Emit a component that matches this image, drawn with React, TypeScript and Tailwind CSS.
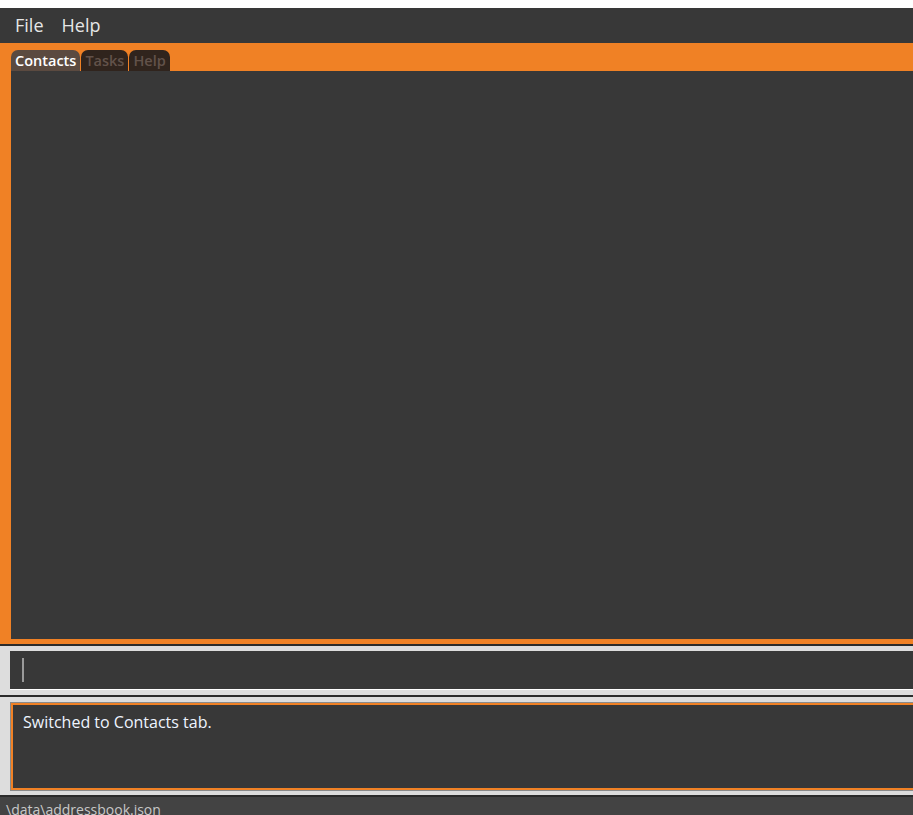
import React from "react";

export default function App() {
  const font = { fontFamily: '"Open Sans", "Noto Sans", sans-serif' };
  return (
    <div className="w-[913px] h-[815px] bg-white flex flex-col overflow-hidden" style={font}>
      <div className="h-[8px] bg-white shrink-0" />
      {/* Menu bar */}
      <div className="h-[35px] shrink-0 bg-[#383838] flex items-center pl-[15px] gap-[18px] text-[18px] text-[#e6e6e6]">
        <span>File</span>
        <span>Help</span>
      </div>
      {/* Orange tab panel */}
      <div className="h-[601px] shrink-0 bg-[#f08125] pl-[11px] pt-[7px] pb-[5px] flex flex-col">
        <div className="h-[21px] flex items-end gap-[1px] shrink-0">
          <div className="h-[21px] pl-[4px] pr-[4px] rounded-t-[7px] bg-[#5b4a40] text-white text-[14.5px] font-semibold leading-[21px]">Contacts</div>
          <div className="h-[21px] pl-[4px] pr-[4px] rounded-t-[7px] bg-[#30241d] text-[#62524a] text-[14.5px] font-semibold leading-[21px]">Tasks</div>
          <div className="h-[21px] pl-[4px] pr-[4px] rounded-t-[7px] bg-[#30241d] text-[#62524a] text-[14.5px] font-semibold leading-[21px]">Help</div>
        </div>
        <div className="flex-1 bg-[#383838]" />
      </div>
      <div className="h-[2px] bg-[#2b2b2b] shrink-0" />
      {/* Command box area */}
      <div className="h-[48px] shrink-0 bg-[#dddddd] pt-[5px] pl-[10px]">
        <div className="h-[39px] bg-[#383838] border-b border-white flex items-center pl-[12px]">
          <div className="w-[2px] h-[24px] bg-[#9a9a9a]" />
        </div>
      </div>
      <div className="h-[1px] bg-[#dddddd] shrink-0" />
      <div className="h-[2px] bg-[#2b2b2b] shrink-0" />
      {/* Result box area */}
      <div className="h-[98px] shrink-0 bg-[#dddddd] pt-[5px] pl-[10px] pb-[4px]">
        <div className="h-full border border-[#8a8a8a] border-r-0">
          <div className="h-full border-[2px] border-[#f08125] border-r-0 bg-[#383838] pl-[10px] pt-[5px] text-[16px] text-[#eef4ff]">
            Switched to Contacts tab.
          </div>
        </div>
      </div>
      <div className="h-[2px] bg-[#2b2b2b] shrink-0" />
      {/* Status bar */}
      <div className="flex-1 bg-[#434343] pl-[6px] pt-[3px] text-[14px] text-[#c8c8c8] leading-[20px] whitespace-nowrap">
        \data\addressbook.json
      </div>
    </div>
  );
}
